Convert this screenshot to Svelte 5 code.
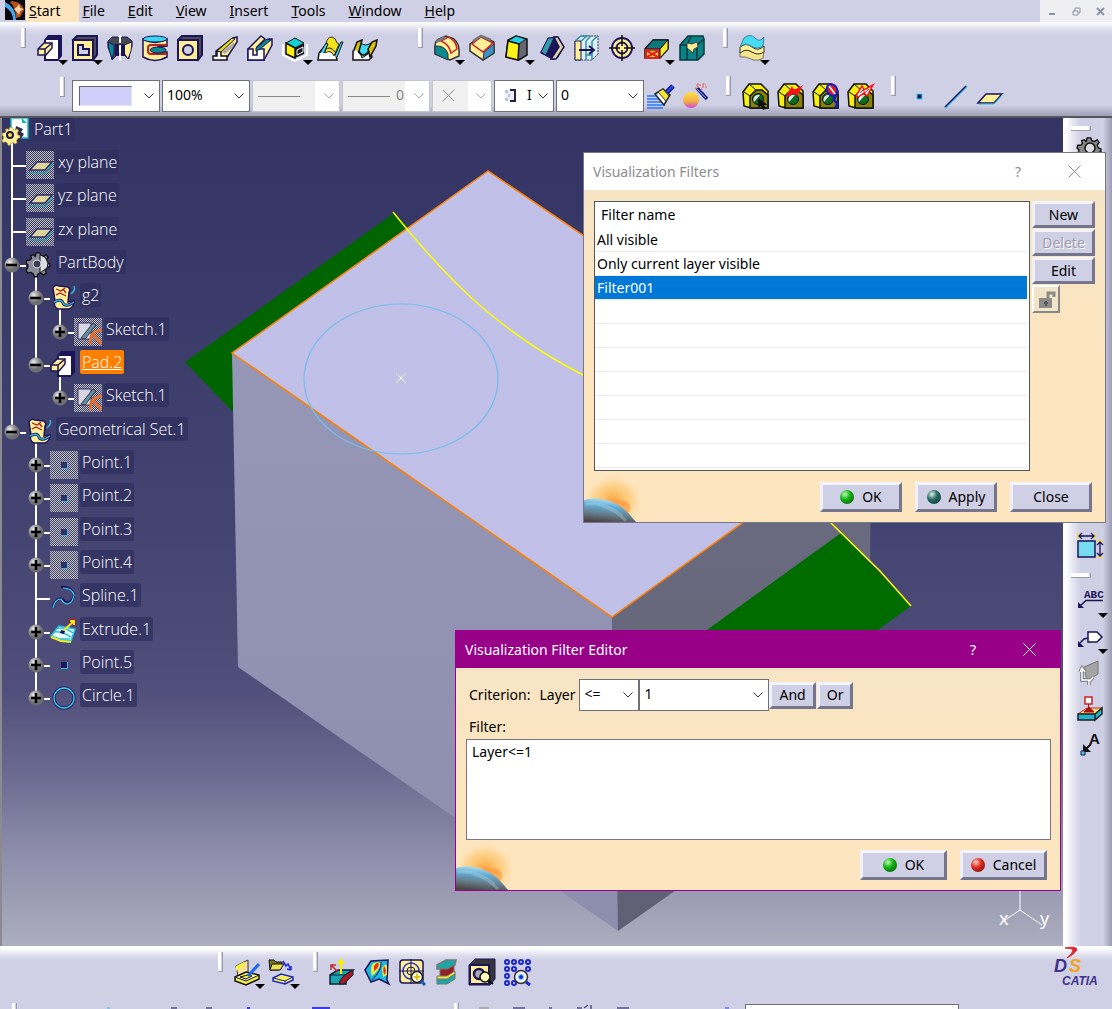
<script lang="ts">
	type TreeRow = {
		label: string;
		level: number;
		icon: string;
		node?: 'plus' | 'minus';
		hidden?: boolean;
		selected?: boolean;
	};
	type Tool = { icon: string; label: string; more?: boolean };

	const N = '#1c1458';
	const Y = '#ffef96';
	const T = '#0a8a90';

	const gear = `<path d="M11 2h4l1 3 3 1 3-2 2 3-2 3 1 3 3 1v3l-3 1-2 3 1 3-3 2-3-2-3 1-1 3H9l-1-3-3-2-3 1-2-3 2-3 0-3-2-2 1-3 3 0 2-2-1-3 3-1 2 2z" transform="scale(.92)"`;
	const nut = `<path d="M1 9l6-8h12l7 7v17H9l-7-2z" fill="#f7ee12" stroke="#111" stroke-width="1.5"/><path d="M8 25V13l6-6h6l6 5v13z" fill="#87800a" stroke="#111" stroke-width="1.5"/><path d="M2 9l6 4M7 1l7 6" stroke="#111"/><circle cx="16" cy="16" r="5.5" fill="#0b6b1e" stroke="#111"/><path d="M12 19a5 5 0 0 1 6-7z" fill="#e4e4f4"/>`;

	const icons: Record<string, string> = {
		pad: `<path d="M7 5l4-5h14v21l-4 5H7z" fill="${N}"/><path d="M9 5h12v19H9z" fill="#fff"/><path d="M1 14l6-6h8v5l-6 7H1z" fill="${Y}" stroke="${N}" stroke-width="1.5"/><path d="M1 14h7v6M8 14l7-6" fill="none" stroke="${N}" stroke-width="1.5"/>`,
		pocket: `<path d="M1 5l4-4h20v19l-4 5z" fill="#4b4b58" stroke="${N}" stroke-width="2"/><path d="M1 5h20v20H1z" fill="${Y}" stroke="${N}" stroke-width="2"/><path d="M6 10h5v4h6v6H6z" fill="#cfcfe5" stroke="${N}" stroke-width="2"/>`,
		shaft: `<path d="M1 6l4-4h6l2 3 2-3h5l5 4v6l-3 4v8l-5-4V10H9v11l-4 4-1-8-3-4z" fill="#474752" stroke="${N}"/><path d="M1 7l6 3v8l-2 6-3-9z" fill="${T}" stroke="${N}"/><path d="M17 10l8-3-1 9-3 8-4-6z" fill="${Y}" stroke="${N}"/><path d="M8 9h4v12H8zM14 9h4v12h-4z" fill="${N}"/><path d="M13 0v26" stroke="#fff" stroke-width="2" stroke-dasharray="8 2"/>`,
		groove: `<path d="M1 4q12 7 24 0v7l-9 1v5h9v5q-12 7-24 0z" fill="${Y}" stroke="${N}" stroke-width="1.5"/><ellipse cx="13" cy="4" rx="12" ry="3" fill="#36d5f5" stroke="${N}"/><path d="M25 10H9q-3 0-3 3v3q0 3 3 3h16" fill="none" stroke="#bb2222" stroke-width="2"/><ellipse cx="16" cy="15" rx="8" ry="3" fill="${T}" stroke="${N}"/>`,
		hole: `<path d="M1 5l4-4h20v19l-4 5z" fill="#4b4b58" stroke="${N}" stroke-width="2"/><path d="M1 5h20v20H1z" fill="${Y}" stroke="${N}" stroke-width="2"/><circle cx="11" cy="15" r="5" fill="#cfcfe5" stroke="${N}" stroke-width="2"/>`,
		rib: `<path d="M14 24L25 7V2l-4 1L4 16v5z" fill="${Y}" stroke="${N}" stroke-width="1.5"/><path d="M1 25v-4h4v-5h4v5h6v4z" fill="#fff" stroke="#111" stroke-width="1.5"/><path d="M5 16L20 3l3 1L9 17z" fill="#e8dc22" stroke="#111"/><path d="M10 17L22 7v4l-9 8z" fill="#aaa"/>`,
		slot: `<path d="M1 14L14 1l4 3-8 8v3L22 4h3v6L17 25H1z" fill="${Y}" stroke="${N}" stroke-width="1.5"/><path d="M1 14h5v6h4v-6h7v11H1z" fill="#fff" stroke="${N}" stroke-width="1.5"/><path d="M9 16v-3L20 4l4 1-11 9z" fill="${T}" stroke="${N}"/>`,
		solidCombine: `<path d="M1 9v11l12 6 12-6V9" fill="none" stroke="#fff" stroke-width="2"/><path d="M4 8l9-5 9 5-9 5z" fill="#12cfd5" stroke="#111"/><path d="M4 8l9 5v10l-9-4z" fill="#ffef12" stroke="#111" stroke-width="1.5"/><path d="M22 8l-9 5v10l9-4z" fill="#16161c"/><path d="M15 15l6-3v5l-6 3z" fill="none" stroke="#fff"/>`,
		multiSection: `<path d="M1 25l1-7 5-6 4 3 8 5 1 5z" fill="#fff" stroke="#111" stroke-width="1.5"/><path d="M9 9q1-7 6-7 4 1 5 6l2 1-5 12q-3-7-9-3z" fill="#f5e21b" stroke="#333"/><path d="M3 18l6-10 2 1-4 9M18 20l6-13h2l-6 15" fill="#3fdaf3" stroke="#111"/><path d="M8 15q5-5 10 2" fill="none" stroke="#111"/>`,
		removedMulti: `<path d="M1 25v-9l5-4 12 4 2 6-3 3z" fill="#fff" stroke="#111" stroke-width="1.5"/><path d="M6 12l3-4q4 4 10 0l-3 11-6 4z" fill="#3fdaf3" stroke="#111"/><path d="M2 15L5 7l5-2-3 11M16 14l4-7 5-2-1 6-6 11z" fill="#d3bd16" stroke="#111" stroke-width="1.5"/><path d="M6 16q5 8 11 0" fill="none" stroke="#111" stroke-width="1.5"/>`,
		fillet: `<path d="M1 11q0-5 4-7l7-3 8 3q5 5 5 11v6l-9 4-15-6z" fill="${Y}" stroke="#333" stroke-width="1.5"/><path d="M1 11q10-1 13 8v6L1 19z" fill="${T}" stroke="#333"/><path d="M7 6l7-4q8 3 9 12l-6 4Q15 9 7 6z" fill="${Y}" stroke="#c9222c" stroke-width="1.5"/><path d="M2 7l9-5" stroke="#777" stroke-width="3"/>`,
		chamfer: `<path d="M1 9L12 1l13 6v11l-11 7L1 16z" fill="${Y}" stroke="#333" stroke-width="1.5"/><path d="M15 17l10-8v9l-11 7z" fill="#3c93c8" stroke="#333"/><path d="M3 9l9-7 12 6-10 9z" fill="${Y}" stroke="#c9222c" stroke-width="1.5"/><path d="M4 6l8-5 10 4" fill="none" stroke="#777" stroke-width="2.5"/>`,
		draft: `<path d="M4 5l8-4 11 3v16l-8 5-13-3z" fill="#666672" stroke="#111" stroke-width="1.5"/><path d="M4 6l8-5 10 3-7 5z" fill="#26cbe0" stroke="#111"/><path d="M4 6l11 3-1 16-12-3z" fill="#fcf31b" stroke="#111" stroke-width="1.5"/>`,
		shell: `<path d="M1 18L9 3l9-2 7 11-6 11-5 2z" fill="${N}"/><path d="M2 17L9 3h6L7 20z" fill="#3199a7" stroke="${N}"/><path d="M15 2h4l6 10-8 12h-5l8-12z" fill="#dcd7a5" stroke="${N}" stroke-width="1.5"/>`,
		thickness: `<path d="M1 6l6-5h17v18l-6 6H1z" fill="#d9f0f7" stroke="#334" stroke-dasharray="2 1"/><path d="M1 6h6v19H1z" fill="${Y}" stroke="${N}"/><path d="M1 6l6-5h6L7 6M12 6v19M18 6v19M12 6l5-5M18 6l6-5M12 20h6" fill="none" stroke="#398da9" stroke-width="1.5"/><path d="M5 15h14m-4-4l5 4-5 4" fill="none" stroke="${N}" stroke-width="2"/>`,
		thread: `<circle cx="13" cy="13" r="10" fill="${Y}" stroke="${N}" stroke-width="1.8"/><circle cx="13" cy="13" r="5.5" fill="none" stroke="${N}" stroke-width="1.8"/><path d="M13 0v11M13 15v11M0 13h11M15 13h11" stroke="#111" stroke-width="1.5"/>`,
		removeFace: `<path d="M1 14L9 5h15v9l-8 9H1z" fill="#e2de25" stroke="#111" stroke-width="1.5"/><path d="M1 14L9 5h15l-8 9z" fill="#0a777a" stroke="#111"/><path d="M2 15h13v8H2z" fill="#ffe62b" stroke="#d22" stroke-width="2"/><path d="M3 16l11 6M14 16L3 22" stroke="#d22" stroke-width="2"/><path d="M16 14l8-9v9l-8 9z" fill="#fae92e" stroke="#111"/>`,
		replaceFace: `<path d="M1 10l8-9h15l1 3v15l-6 6H1z" fill="#0a8286" stroke="#063940" stroke-width="1.5"/><path d="M1 10h7v15M18 10v15M8 10l4-9M18 10l7-6" fill="none" stroke="#063940" stroke-width="1.5"/><path d="M8 8l5 1 5-2 1 5-4 2-1 4-6-5z" fill="${Y}" stroke="#444"/>`,
		layers: `<path d="M1 17q6-4 12 0t12-1l-1 7q-6 4-12 1T1 22z" fill="#f2e58b" stroke="#776"/><path d="M1 12q6-5 12 0t12-1v6q-6 4-12 0T1 18z" fill="${Y}" stroke="#333"/><path d="M5 3q6-5 11 0t9-1l-1 9q-6 4-12 0T1 12z" fill="#47dcf6" stroke="#389"/>`,
		point: `<path d="M10 11h5v5h-5z" fill="${N}" stroke="#33cfee"/>`,
		line: `<path d="M3 25L25 3" stroke="#2bc6ee" stroke-width="2"/><path d="M3 24L24 3" stroke="${N}" stroke-width="1.5"/>`,
		plane: `<path d="M1 20l8-9h16l-8 9z" fill="${Y}" stroke="${N}" stroke-width="1.5"/><path d="M2 21h15l9-10" fill="none" stroke="#28c4e2"/>`,
		nutSelect: nut + `<path d="M16 15v10l3-2 2 4 3-1-2-4h4z" fill="#111"/>`,
		nutRed: nut + `<path d="M9 13l6-10 2 4 9-5-6 11-3-3-6 4z" fill="#f11"/>`,
		nutFind: nut + `<ellipse cx="20" cy="7" rx="5" ry="6" fill="#d52222" stroke="#1a1ac0" stroke-width="2" transform="rotate(-35 20 7)"/><path d="M17 3l6 8" stroke="#fff" stroke-width="1.5"/><path d="M24 12l-2 5 3 3-1 5" fill="none" stroke="#1a1ac0" stroke-width="2.5"/>`,
		nutSplit: nut + `<path d="M9 13l6-10 2 4 9-5-6 11-3-3-6 4z" fill="#fff" stroke="#f11" stroke-width="1.5"/><path d="M13 10l3-3 2 3 4-4" fill="none" stroke="#f11"/>`,
		brush: `<path d="M0 13h10M0 16h14M0 19h16M0 22h18M0 25h16" stroke="#2678ff" stroke-width="1.5"/><path d="M8 11l8-5 7 6-6 10z" fill="#fff" stroke="#222" stroke-width="1.5"/><path d="M11 9l8 9 3-5-6-7z" fill="#f4e637" stroke="#333"/><path d="M20 9l6-6" stroke="#111a88" stroke-width="5"/><path d="M20 9l6-6" stroke="#2446ff" stroke-width="2"/>`,
		wand: `<defs><linearGradient id="ball" x2="0" y2="1"><stop offset="0" stop-color="#ffe14c"/><stop offset=".6" stop-color="#f2ad44"/><stop offset="1" stop-color="#ce43e4"/></linearGradient></defs><circle cx="9" cy="17" r="8" fill="url(#ball)"/><path d="M15 5l10 11" stroke="#20207a" stroke-width="3.5"/><path d="M15 6l9 9" stroke="#6fb6ff"/><path d="M14 2h10M13 6l4-5M22 0l-3 8M25 4h-5M16 0v5" stroke="#e0898f" stroke-width="1.5" stroke-dasharray="2 1"/>`,
		sketchPen: `<path d="M2 7l12-6v14L4 17z" fill="#ffdf9c" stroke="#333"/><path d="M2 7l8-4v4l-8 5z" fill="#f8f43c"/><path d="M1 18l11-5 13 3v4l-13 6-11-4z" fill="#f5ef43" stroke="#111" stroke-width="1.5"/><path d="M1 18l11 4 13-6M6 18l8-2 4 1-6 3z" fill="#fff" stroke="#111"/><path d="M14 17L25 5" stroke="#1c68f0" stroke-width="3"/>`,
		transfer: `<path d="M0 1h5l2 2h6v3l-3 5H1z" fill="#777422" stroke="#111"/><path d="M3 5h12l-4 6H1z" fill="#e8e052" stroke="#111"/><path d="M14 2l3 5 2-2 3 6m0 0v-4m0 4l-4-1" fill="none" stroke="#1726ea" stroke-width="1.5"/><path d="M4 19l8-4 12 3v3l-8 4-12-3z" fill="#f6f150" stroke="#1c25c4" stroke-width="1.5"/><path d="M4 19l12 3 8-4M16 22v3" fill="none" stroke="#1c25c4"/>`,
		draftAnalysis: `<path d="M1 16l8-5h15l-7 5v9H1z" fill="#16a5ae" stroke="#123" stroke-width="1.5"/><path d="M1 16h15l8-5" fill="none" stroke="#123"/><path d="M24 11v5l-9 9h-5q1-6 6-9z" fill="#a01c28" stroke="#123"/><path d="M9 13L2 6m0 5V6h5" fill="none" stroke="#c42a2a" stroke-width="1.5"/><path d="M12 15V2M9 5l3-4 3 4" fill="none" stroke="#f8f000" stroke-width="2"/>`,
		curvature: `<path d="M1 11L7 2l17-1-1 20 2 4-10-5-8 3z" fill="#19b6df" stroke="${N}" stroke-width="1.5"/><path d="M8 5q5-3 9-1-2 8-9 13-2-6 0-12zM18 9q4-6 5-2v9l-4 2z" fill="#e6eb43"/><path d="M10 7q3-5 5-2-1 5-5 7zM20 7q3 3 1 9-3-3-1-9z" fill="#ea3020"/><path d="M17 3q1 8-9 18" fill="none" stroke="${N}"/>`,
		tap: `<rect x="1" y="1" width="23" height="23" rx="3" fill="${Y}" stroke="${N}" stroke-width="1.5"/><circle cx="12" cy="12" r="8" fill="none" stroke="#2636c8" stroke-width="1.5"/><circle cx="12" cy="12" r="4" fill="none" stroke="${N}"/><path d="M12 0v25M0 12h25" stroke="${N}"/><circle cx="18" cy="18" r="5.5" fill="#fffde0" stroke="#222" stroke-width="1.5"/><path d="M15 18h6M18 15v6" stroke="#d8c021" stroke-width="2"/><path d="M22 22l4 4" stroke="#1c5cc0" stroke-width="3"/>`,
		wall: `<path d="M3 6l9-5h10l-1 5-7 4H3z" fill="#1ba7a5" stroke="#777" stroke-width="1.5"/><path d="M6 10h8l6-4v8l-6 4H6z" fill="#941f26" stroke="#777"/><path d="M3 17h10l8-5v4l-8 5H3z" fill="#f1e53d" stroke="#777"/><path d="M3 20h10l8-5v5l-8 5H3z" fill="#1ba7a5" stroke="#777"/>`,
		holeFind: `<path d="M0 6l6-6h20v20l-5 6H0z" fill="#35353d" stroke="${N}"/><path d="M1 6h19v19H1z" fill="${Y}" stroke="${N}" stroke-width="2"/><circle cx="10" cy="15" r="5" fill="#aab" stroke="${N}" stroke-width="2.5"/><circle cx="16" cy="18" r="5" fill="#fffbb5" stroke="#111" stroke-width="1.5"/><path d="M19 21l5 4" stroke="#111" stroke-width="2"/>`,
		patternFind: `<g fill="none" stroke="#1a26d0" stroke-width="2"><circle cx="3" cy="3" r="2"/><circle cx="10" cy="3" r="2"/><circle cx="17" cy="3" r="2"/><circle cx="24" cy="3" r="2"/><circle cx="3" cy="10" r="2"/><circle cx="3" cy="17" r="2"/><circle cx="3" cy="24" r="2"/><circle cx="10" cy="10" r="2"/><circle cx="10" cy="24" r="2"/><circle cx="24" cy="10" r="2"/></g><circle cx="17" cy="18" r="6.5" fill="#f2f2fa" stroke="#333" stroke-width="1.5"/><circle cx="17" cy="18" r="2.5" fill="#1a26d0" stroke="#7cf" /><path d="M22 23l4 3" stroke="#1a26d0" stroke-width="3"/>`,
		part: `<path d="M9 0h17v20H9z" fill="#fff" stroke="#12b9c4" stroke-width="1.5"/><path d="M20 0v5h5z" fill="#12b9c4"/><path d="M14 8l7 3-2 3 3 2-5 8-6 2z" fill="#2c2c50"/><g transform="translate(0 8) scale(.75)">${gear} fill="${Y}" stroke="#b49a30"/></g><circle cx="8" cy="17" r="3" fill="#f6e81c" stroke="${N}" stroke-width="2"/>`,
		treePlane: `<path d="M4 19l7-8h15l-7 8z" fill="#fff2a0" stroke="${N}" stroke-width="1.5"/><path d="M3 22h17l6-9" fill="none" stroke="#15a2b0" stroke-width="1.5"/>`,
		body: `${gear} fill="#8c8c9c" stroke="#111" stroke-width="1.5"/><path d="M14 4l5 2 3 6-1 5-7 5z" fill="#dcdce4" stroke="#111"/><circle cx="11" cy="13" r="4" fill="#3c3c58" stroke="#ddd"/>`,
		geoSet: `<path d="M3 4q2-4 6-2l9 1q3 3 1 5l-1 10 6-1q0 6-5 8H8q-5-2-3-8z" fill="${Y}" stroke="${N}" stroke-width="1.5"/><path d="M6 5l5 2 4-3M6 11l4-2 6 3M13 5l3 4" fill="none" stroke="#b11b20" stroke-width="1.3"/><path d="M4 18q7-4 9 1t11-1" fill="none" stroke="${N}" stroke-width="3"/><path d="M4 18q7-4 9 1t11-1M24 2q2 4-3 8" fill="none" stroke="#30b8e2" stroke-width="1.5"/>`,
		sketch: `<path d="M4 5h13v16H4z" fill="#f4f4ff" stroke="${N}"/><path d="M7 20l12-15 3 2-11 14z" fill="#5b94ae" stroke="#222"/><path d="M17 26q-3-12 11-14M20 17l7 9" fill="none" stroke="#ff6a10" stroke-width="3"/>`,
		treePoint: `<path d="M11 11h6v6h-6z" fill="${N}"/><path d="M11 17.5h6.5V11" fill="none" stroke="#29c4ea"/>`,
		spline: `<path d="M11 3q10-1 13 7-1 10-9 8-2-4-6-3-5 2-6 9" fill="none" stroke="${N}" stroke-width="2.5"/><path d="M13 4q9 0 11 7-1 8-7 9-4-1-6-5-6 0-8 9" fill="none" stroke="#38d2f5" stroke-width="1.2"/>`,
		extrude: `<path d="M1 18l8-10 16 3-4 12-10-1z" fill="#e9fdff" stroke="#28bfdf" stroke-width="1.5"/><path d="M1 18l8 3 11 0M6 11q7-3 17 4M4 14q7-1 17 5" fill="none" stroke="#28bfdf" stroke-width="1.5"/><path d="M1 19l10 4 10 1" fill="none" stroke="#f7ec1e" stroke-width="2"/><path d="M19 1h7v6h-7z" fill="#b8131c"/><path d="M12 14L24 3M20 3h4v4" fill="none" stroke="#f7ec1e" stroke-width="2"/><path d="M11 12l4 1-1 3-4-1z" fill="${N}"/>`,
		circle: `<circle cx="14" cy="14" r="10" fill="none" stroke="${N}" stroke-width="3"/><circle cx="14" cy="14" r="10" fill="none" stroke="#38d2f5" stroke-width="1.3"/>`,
		gear: `<path d="M0 14h14v12H0z" fill="#a9dcd4"/>${gear} fill="#888" stroke="#111" stroke-width="1.5"/><circle cx="13" cy="12" r="5" fill="#ddd" stroke="#111" stroke-width="1.5"/>`,
		measure: `<path d="M1 9h17v16H1z" fill="#78dcf1" stroke="${N}" stroke-width="1.5"/><path d="M1 1v6M18 1v6M20 9h6M20 25h6" stroke="#e8da64" stroke-width="2"/><path d="M2 4h15M5 1L2 4l3 3M14 1l3 3-3 3M23 10v14M20 13l3-3 3 3M20 21l3 3 3-3" fill="none" stroke="${N}" stroke-width="1.3"/>`,
		text: `<text x="7" y="10" font-size="11" font-weight="700" font-family="Liberation Mono, monospace" fill="${N}">ABC</text><path d="M26 12.5H9L3 18" fill="none" stroke="${N}" stroke-width="1.5"/><path d="M1 14v6h6z" fill="${N}"/>`,
		flag: `<path d="M11 8h9l5 5-5 5h-9z" fill="#fff" stroke="${N}" stroke-width="1.5"/><path d="M11 14l-4 1-4 4" fill="none" stroke="${N}" stroke-width="1.5"/><path d="M1 17v6h6z" fill="${N}"/>`,
		view: `<path d="M7 7l14-6v13L10 21z" fill="#a5a5a5" stroke="#777"/><path d="M5 9v11h7v5m-9-13l2-4 3 4M12 22l4-5" fill="none" stroke="#777" stroke-width="3.5"/><path d="M5 9v11h7v5m-9-13l2-4 3 4M12 22l4-5" fill="none" stroke="#fff" stroke-width="1.5"/>`,
		stamp: `<path d="M1 18l9-6h15l-7 6z" fill="#ffdf76" stroke="#c22"/><path d="M1 18h17v6H1zM18 18l7-6v6l-7 6z" fill="#23b3cd" stroke="#222" stroke-width="1.5"/><path d="M8 1h7v7H8z" fill="#fff" stroke="#c22" stroke-width="1.5"/><path d="M11.5 8v5M7 16l5-5 5 5z" fill="#a11" stroke="#a11"/>`,
		note: `<text x="12" y="12" font-size="15" font-weight="700" font-family="Liberation Sans, sans-serif" fill="#111">A</text><path d="M14 12l-5 5" stroke="#111" stroke-width="2"/><path d="M6 12v8h8z" fill="#111"/><path d="M4 19h4v4H4z" fill="#48c7df" stroke="${N}"/>`
	};

	// checkerboard behind the icons of hidden elements, one dashed line per pixel row
	const dither = Array.from({ length: 28 }, (_, y) => `M${y % 2} ${y + 0.5}H28`).join('');

	const menus = ['File', 'Edit', 'View', 'Insert', 'Tools', 'Window', 'Help'];

	const sketchTools: Tool[] = [
		{ icon: 'pad', label: 'Pad', more: true },
		{ icon: 'pocket', label: 'Pocket', more: true },
		{ icon: 'shaft', label: 'Shaft' },
		{ icon: 'groove', label: 'Groove' },
		{ icon: 'hole', label: 'Hole' },
		{ icon: 'rib', label: 'Rib' },
		{ icon: 'slot', label: 'Slot' },
		{ icon: 'solidCombine', label: 'Solid Combine', more: true },
		{ icon: 'multiSection', label: 'Multi-sections Solid' },
		{ icon: 'removedMulti', label: 'Removed Multi-sections Solid' }
	];
	const dressUpTools: Tool[] = [
		{ icon: 'fillet', label: 'Edge Fillet', more: true },
		{ icon: 'chamfer', label: 'Chamfer' },
		{ icon: 'draft', label: 'Draft Angle', more: true },
		{ icon: 'shell', label: 'Shell' },
		{ icon: 'thickness', label: 'Thickness' },
		{ icon: 'thread', label: 'Thread' },
		{ icon: 'removeFace', label: 'Remove Face', more: true },
		{ icon: 'replaceFace', label: 'Replace Face' }
	];
	const surfaceTools: Tool[] = [{ icon: 'layers', label: 'Thick Surface', more: true }];
	const painterTools: Tool[] = [
		{ icon: 'brush', label: 'Painter' },
		{ icon: 'wand', label: 'Wizard' }
	];
	const selectTools: Tool[] = [
		{ icon: 'nutSelect', label: 'Select' },
		{ icon: 'nutRed', label: 'Update' },
		{ icon: 'nutFind', label: 'Search' },
		{ icon: 'nutSplit', label: 'Manual Update' }
	];
	const referenceTools: Tool[] = [
		{ icon: 'point', label: 'Point' },
		{ icon: 'line', label: 'Line' },
		{ icon: 'plane', label: 'Plane' }
	];
	const dockTop: Tool[] = [
		{ icon: 'gear', label: 'Workbench' },
		...['pad', 'hole', 'rib', 'draft', 'shell', 'thread', 'plane', 'line', 'point', 'stamp'].map(
			(icon) => ({ icon, label: icon })
		),
		{ icon: 'measure', label: 'Measure' }
	];
	const dockNotes: Tool[] = [
		{ icon: 'text', label: 'Text with Leader', more: true },
		{ icon: 'flag', label: 'Flag Note', more: true },
		{ icon: 'view', label: 'View' },
		{ icon: 'stamp', label: 'Annotation' },
		{ icon: 'note', label: 'Note' }
	];
	const sketcherTools: Tool[] = [
		{ icon: 'sketchPen', label: 'Sketch', more: true },
		{ icon: 'transfer', label: 'Insert Body', more: true }
	];
	const analysisTools: Tool[] = [
		{ icon: 'draftAnalysis', label: 'Draft Analysis' },
		{ icon: 'curvature', label: 'Curvature Analysis' },
		{ icon: 'tap', label: 'Tap Analysis' },
		{ icon: 'wall', label: 'Wall Thickness' },
		{ icon: 'holeFind', label: 'Hole Analysis' },
		{ icon: 'patternFind', label: 'Pattern Analysis' }
	];

	const tree: TreeRow[] = [
		{ label: 'Part1', level: 0, icon: 'part' },
		{ label: 'xy plane', level: 1, icon: 'treePlane', hidden: true },
		{ label: 'yz plane', level: 1, icon: 'treePlane', hidden: true },
		{ label: 'zx plane', level: 1, icon: 'treePlane', hidden: true },
		{ label: 'PartBody', level: 1, icon: 'body', node: 'minus' },
		{ label: 'g2', level: 2, icon: 'geoSet', node: 'minus' },
		{ label: 'Sketch.1', level: 3, icon: 'sketch', node: 'plus', hidden: true },
		{ label: 'Pad.2', level: 2, icon: 'pad', node: 'minus', selected: true },
		{ label: 'Sketch.1', level: 3, icon: 'sketch', node: 'plus', hidden: true },
		{ label: 'Geometrical Set.1', level: 1, icon: 'geoSet', node: 'minus' },
		{ label: 'Point.1', level: 2, icon: 'treePoint', node: 'plus', hidden: true },
		{ label: 'Point.2', level: 2, icon: 'treePoint', node: 'plus', hidden: true },
		{ label: 'Point.3', level: 2, icon: 'treePoint', node: 'plus', hidden: true },
		{ label: 'Point.4', level: 2, icon: 'treePoint', node: 'plus', hidden: true },
		{ label: 'Spline.1', level: 2, icon: 'spline' },
		{ label: 'Extrude.1', level: 2, icon: 'extrude', node: 'plus' },
		{ label: 'Point.5', level: 2, icon: 'treePoint', node: 'plus' },
		{ label: 'Circle.1', level: 2, icon: 'circle', node: 'plus' }
	];

	const filters = ['All visible', 'Only current layer visible', 'Filter001'];
	const emptyRows = Array(7).fill('');

	let selectedFilter = $state('Filter001');
	let filterText = $state('Layer<=1');
</script>

{#snippet icon(name: string)}
	<svg class="icon" viewBox="0 0 26 26" fill="none" aria-hidden="true">{@html icons[name]}</svg>
{/snippet}

{#snippet tools(items: Tool[])}
	{#each items as tool}
		<button class="tool" aria-label={tool.label}>
			{@render icon(tool.icon)}
			{#if tool.more}<span class="more"></span>{/if}
		</button>
	{/each}
{/snippet}

{#snippet chevron()}
	<svg class="chevron" viewBox="0 0 10 6" aria-hidden="true">
		<path d="M.5 .5L5 5l4.5-4.5" fill="none" stroke="currentColor" />
	</svg>
{/snippet}

{#snippet planet()}
	<svg class="planet" viewBox="0 0 60 48" aria-hidden="true">
		<defs>
			<radialGradient id="glow"><stop offset="0" stop-color="#ff9a3c" /><stop offset=".25" stop-color="#fdb95c" /><stop offset=".65" stop-color="#fcd080" stop-opacity=".7" /><stop offset="1" stop-color="#fde5bf" stop-opacity="0" /></radialGradient>
			<linearGradient id="globe" x1=".55" y1="0" x2=".3" y2="1"><stop offset="0" stop-color="#c4e6f2" /><stop offset=".35" stop-color="#62acd4" /><stop offset=".65" stop-color="#66808f" /><stop offset="1" stop-color="#4c4444" /></linearGradient>
		</defs>
		<ellipse cx="29" cy="28" rx="31" ry="28" fill="url(#glow)" />
		<circle cx="38" cy="34" r="8" fill="#ff9440" fill-opacity=".6" />
		<path d="M0 26Q12 22 26 27T52 48H0z" fill="url(#globe)" />
		<path d="M2 30q20-2 36 12M18 32q14 4 24 15" fill="none" stroke="#bfe2f2" stroke-opacity=".3" stroke-width="3" />
	</svg>
{/snippet}

<div class="app">
	<nav class="menubar">
		<span class="app-icon">
			<svg viewBox="0 0 20 20" aria-hidden="true">
				<path d="M0 0h20v20H0z" fill="#08080c" />
				<path d="M7 1q10 1 12 9l-4 7-4 1Q11 8 5 2z" fill="#b4501e" />
				<path d="M14 4l1 4 4 1-4 2-1 4-2-3-3-3 3-2z" fill="#ffd49a" />
				<path d="M0 2q11 5 11 18H8Q8 11 0 7z" fill="#4aa5ea" />
			</svg>
		</span>
		<button class="menu start"><u>S</u>tart</button>
		{#each menus as menu}
			<button class="menu"><u>{menu[0]}</u>{menu.slice(1)}</button>
		{/each}
		<div class="window-buttons">
			<button aria-label="Minimize"><svg viewBox="0 0 9 9"><path d="M1 7h6" stroke-width="2" /></svg></button>
			<button aria-label="Restore"><svg viewBox="0 0 9 9"><path d="M1 4h5v4H1zM3 4V1h5v5H6" /></svg></button>
			<button aria-label="Close"><svg viewBox="0 0 9 9"><path d="M1 1l7 7M8 1L1 8" stroke-width="2" /></svg></button>
		</div>
	</nav>

	<header class="bars">
		<div class="bar">
			<div class="group solids"><span class="grip"></span>{@render tools(sketchTools)}</div>
			<div class="group dress"><span class="grip"></span>{@render tools(dressUpTools)}</div>
			<div class="group"><span class="grip"></span>{@render tools(surfaceTools)}</div>
		</div>
		<div class="bar props">
			<span class="grip"></span>
			<div class="combos">
				<div class="combo">
					<select aria-label="Fill color"><option></option></select>
					<span class="swatch"></span>
					{@render chevron()}
				</div>
				<div class="combo">
					<select aria-label="Transparency"><option>100%</option></select>
					{@render chevron()}
				</div>
				<div class="combo off">
					<select aria-label="Line weight" disabled><option></option></select>
					<span class="rule"></span>
					{@render chevron()}
				</div>
				<div class="combo off line-type">
					<select aria-label="Line type" disabled><option>0</option></select>
					<span class="rule"></span>
					{@render chevron()}
				</div>
				<div class="combo narrow off">
					<select aria-label="Point symbol" disabled><option></option></select>
					<svg class="mark" viewBox="0 0 13 13"><path d="M1 1l11 11M12 1L1 12" stroke="#888" /></svg>
					{@render chevron()}
				</div>
				<div class="combo narrow">
					<select aria-label="Rendering style"><option>I</option></select>
					<svg class="mark" viewBox="0 0 13 13"><path d="M1 1h10v11H1z" fill="#ececfa" /><path d="M1 1h3v3H1zM1 9h3v3H1zM4 5h2v3H4z" fill="#b8c4ea" /><path d="M6 1h5v11H6" fill="none" stroke="#222244" stroke-width="2" /></svg>
					{@render chevron()}
				</div>
				<div class="combo">
					<select aria-label="Layer number"><option>0</option></select>
					{@render chevron()}
				</div>
			</div>
			<div class="group painter">{@render tools(painterTools)}</div>
			<div class="group"><span class="grip"></span>{@render tools(selectTools)}</div>
			<div class="group"><span class="grip"></span>{@render tools(referenceTools)}</div>
		</div>
	</header>

	<div class="workspace">
		<main class="viewport">
			<svg class="scene" viewBox="0 118 1063 828" preserveAspectRatio="xMinYMin slice" role="img" aria-label="3D part">
				<defs>
					<linearGradient id="leftFace" x2="0" y2="1"><stop offset="0" stop-color="#9696b6" /><stop offset="1" stop-color="#8d8dae" /></linearGradient>
					<linearGradient id="rightFace" x2="0" y2="1"><stop offset="0" stop-color="#6c6c82" /><stop offset="1" stop-color="#606074" /></linearGradient>
				</defs>
				<path d="M394 213L185 362l47 49 40-30 150-140z" fill="#006500" />
				<path d="M232 353l380 264 6 314-380-264z" fill="url(#leftFace)" />
				<path d="M612 617l259-187-2 324-251 177z" fill="url(#rightFace)" />
				<path d="M488 171L232 353l380 264 259-187z" fill="#c0c0e8" stroke="#ff8000" stroke-width="1.5" />
				<path d="M841 533l70 73-65 47H675z" fill="#006c00" />
				<path d="M393 212C450 283 500 332 583 375S800 480 831 523L880 571 911 606" fill="none" stroke="#ffff00" stroke-width="1.5" />
				<ellipse cx="401" cy="379" rx="97" ry="75" fill="none" stroke="#76bdec" stroke-width="1.2" />
				<path d="M396 373l10 10M406 373l-10 10" stroke="#fff" />
				<path d="M1020 880v30l-15 10M1020 910l22 15" fill="none" stroke="#fff" />
				<text x="999" y="925">x</text>
				<text x="1040" y="925">y</text>
			</svg>

			<div class="tree">
				<svg class="tree-lines" viewBox="0 0 80 600" aria-hidden="true">
					<path d="M12 20v298M36 155v97M60 186v32M60 252v34M36 320v265M12 51h14M12 84h14M12 117h14M36 484h14" fill="none" stroke="#fff" stroke-width="2" />
				</svg>
				<ul>
					{#each tree as row}
						<li class="level-{row.level}">
							{#if row.node}
								<button class="node" aria-label="Toggle {row.label}">
									<svg viewBox="0 0 16 16">
										<defs><radialGradient id="ball-grey" cx=".35" cy=".3"><stop offset="0" stop-color="#eee" /><stop offset=".5" stop-color="#a5a5a5" /><stop offset="1" stop-color="#6e6e72" /></radialGradient></defs>
										<circle cx="8" cy="8" r="7.5" fill="url(#ball-grey)" />
										<path d={row.node === 'plus' ? 'M3 8h10M8 3v10' : 'M2 8h11'} stroke="#000" stroke-width="2.5" />
									</svg>
								</button>
								<span class="tick"></span>
							{/if}
							<svg class="tree-icon" viewBox="0 0 28 28" aria-hidden="true">
								{#if row.hidden}<path d={dither} stroke="#c0c0bc" stroke-dasharray="1 1" />{/if}
								<g opacity={row.hidden ? 0.75 : 1}>{@html icons[row.icon]}</g>
							</svg>
							<span class="label" class:selected={row.selected}>{row.label}</span>
						</li>
					{/each}
				</ul>
			</div>
		</main>

		<aside class="dock">
			<span class="grip"></span>
			{@render tools(dockTop)}
			<span class="grip"></span>
			{@render tools(dockNotes)}
		</aside>
	</div>

	<footer class="bottom">
		<div class="bar sketcher">
			<div class="group"><span class="grip"></span>{@render tools(sketcherTools)}</div>
			<div class="group"><span class="grip"></span>{@render tools(analysisTools)}</div>
		</div>
		<div class="clipped">
			<span class="grip"></span>
			<svg viewBox="0 0 437 6" aria-hidden="true">
				<path d="M90 5h3" stroke="#2ac0e8" />
				<path d="M154 5h6M189 5h6" stroke="#1c1458" />
				<path d="M230 5h3M295 5h18" stroke="#3a3af0" stroke-width="2" />
			</svg>
			<span class="grip"></span>
			<svg class="second" viewBox="0 0 286 6" aria-hidden="true">
				<path d="M20 5h10" stroke="#888" />
				<path d="M54 5h12M90 5h3M118 5h5M125 5l4-3M132 2v4M158 5h12" stroke="#1c1458" />
				<path d="M266 5h4" stroke="#2a4cf0" />
			</svg>
			<input aria-label="Power input" />
		</div>
		<svg class="logo" viewBox="0 0 52 42" role="img" aria-label="CATIA">
			<path d="M12 2q10-2 12 1-1 4-10 9 6-5 6-8-1-2-8-2z" fill="#e0262c" stroke="#e0262c" />
			<text x="1" y="26" font-size="18" fill="#40318c">D<tspan dx="2" fill="#f5a31c">S</tspan></text>
			<text x="9" y="39" font-size="12" fill="#40318c">CATIA</text>
		</svg>
	</footer>

	<section class="dialog filters" aria-label="Visualization Filters">
		<div class="titlebar">
			<h2>Visualization Filters</h2>
			<button aria-label="Help">?</button>
			<button aria-label="Close"><svg viewBox="0 0 13 13"><path d="M.5 .5l12 12M12.5 .5l-12 12" /></svg></button>
		</div>
		<div class="body">
			<div class="filter-area">
				<div class="list">
					<table>
						<thead><tr><th>Filter name</th></tr></thead>
						<tbody>
							{#each filters as filter}
								<tr class:current={filter === selectedFilter} onclick={() => (selectedFilter = filter)}>
									<td>{filter}</td>
								</tr>
							{/each}
							{#each emptyRows as _}
								<tr><td></td></tr>
							{/each}
						</tbody>
					</table>
				</div>
				<div class="side">
					<button class="btn">New</button>
					<button class="btn" disabled>Delete</button>
					<button class="btn">Edit</button>
					<button class="lock" aria-label="Lock">
						<svg viewBox="0 0 20 20"><path d="M3 9h13v10H3z" fill="#8c8c86" /><path d="M12 9V4h6v4" fill="none" stroke="#8c8c86" stroke-width="3" /><path d="M10 12v5M8 14h4" stroke="#55555a" stroke-width="2" /></svg>
					</button>
				</div>
			</div>
			<div class="actions">
				<button class="btn"><span class="led green"></span>OK</button>
				<button class="btn"><span class="led teal"></span>Apply</button>
				<button class="btn">Close</button>
			</div>
			{@render planet()}
		</div>
	</section>

	<section class="dialog editor" aria-label="Visualization Filter Editor">
		<div class="titlebar">
			<h2>Visualization Filter Editor</h2>
			<button aria-label="Help">?</button>
			<button aria-label="Close"><svg viewBox="0 0 13 13"><path d="M.5 .5l12 12M12.5 .5l-12 12" /></svg></button>
		</div>
		<div class="body">
			<div class="criterion">
				<span>Criterion:</span>
				<label for="operator">Layer</label>
				<div class="combo operator">
					<select id="operator"><option>&lt;=</option></select>
					{@render chevron()}
				</div>
				<div class="combo value">
					<select aria-label="Layer value"><option>1</option></select>
					{@render chevron()}
				</div>
				<button class="btn">And</button>
				<button class="btn">Or</button>
			</div>
			<label class="filter-label" for="filter">Filter:</label>
			<textarea id="filter" bind:value={filterText}></textarea>
			<div class="actions">
				<button class="btn"><span class="led green"></span>OK</button>
				<button class="btn"><span class="led red"></span>Cancel</button>
			</div>
			{@render planet()}
		</div>
	</section>
</div>

<style>
	:global(body) {
		margin: 0;
		background: #cfcfe5;
	}

	.app {
		position: relative;
		display: flex;
		flex-direction: column;
		height: 100vh;
		overflow: hidden;
		background: #cfcfe5;
		color: #000;
		font: 14px/20px 'Segoe UI', 'Noto Sans', sans-serif;
	}

	button,
	select,
	input,
	textarea {
		font: inherit;
		color: inherit;
		box-sizing: border-box;
	}

	button {
		border: 0;
		padding: 0;
		background: none;
	}

	svg {
		display: block;
	}

	/* menu bar */
	.menubar {
		display: flex;
		align-items: stretch;
		gap: 1px;
		height: 22px;
		padding-left: 5px;
	}

	.app-icon {
		width: 20px;
	}

	.app-icon svg {
		width: 20px;
		height: 20px;
	}

	.menu {
		padding: 0 11px;
	}

	.menu.start {
		padding: 0 19px 0 3px;
		margin-right: -9px;
		background: #fde4bd;
	}

	.window-buttons {
		display: flex;
		justify-content: space-around;
		align-items: center;
		width: 72px;
		margin-left: auto;
		background: #efeff2;
	}

	.window-buttons svg {
		width: 9px;
		height: 9px;
		fill: none;
		stroke: #8a94a4;
	}

	/* toolbars */
	.bars {
		height: 94px;
		background: linear-gradient(#ffffff, #dadaeb 8px, #cfcfe5 14px, #cfcfe5 83px, #a2a2b8 93px);
		border-bottom: 2px solid #55555c;
	}

	.bar {
		display: flex;
		align-items: flex-start;
	}

	.bars .bar {
		padding: 13px 0 0 21px;
		height: 38px;
	}

	.bars .props {
		height: 34px;
		padding: 9px 0 0 60px;
	}

	.group {
		display: flex;
		align-items: flex-start;
		gap: 9px;
		padding-right: 18px;
	}

	.solids {
		padding-right: 40px;
	}

	.grip {
		flex: none;
		box-sizing: border-box;
		width: 5px;
		height: 20px;
		background: #fff;
		border-right: 1px solid #9a9aae;
		border-bottom: 1px solid #9a9aae;
		box-shadow: inset -1px 0 #cfcfe5;
		margin-top: -7px;
		margin-right: 2px;
	}

	.tool {
		position: relative;
		flex: none;
		width: 26px;
		height: 26px;
	}

	.icon {
		width: 26px;
		height: 26px;
		overflow: visible;
	}

	.more {
		position: absolute;
		right: -5px;
		bottom: -4px;
		border: 5px solid transparent;
		border-top-color: #000;
		border-bottom: 0;
	}

	.combos {
		display: flex;
		gap: 2px;
		margin-left: 5px;
		margin-top: -2px;
	}

	.props > .grip {
		margin-top: -5px;
	}

	.props .group {
		margin-top: 1px;
	}

	.combo {
		position: relative;
		width: 88px;
		height: 32px;
		color: #000;
	}

	.combo select {
		display: block;
		width: 100%;
		height: 100%;
		padding: 0 4px 2px;
		border: 1px solid #707078;
		border-radius: 0;
		background: #fff;
		appearance: none;
		opacity: 1;
	}

	.combo .chevron {
		position: absolute;
		right: 6px;
		top: 13px;
		width: 10px;
		height: 6px;
		color: #333;
		pointer-events: none;
	}

	.combo.off select {
		border-color: #c4c4cc;
		background: linear-gradient(90deg, #f0f0f0 0 72%, #fff 72%);
	}

	.combo.off .chevron {
		color: #aaa;
	}

	.line-type select {
		padding-left: 53px;
		color: #888;
	}

	.swatch {
		position: absolute;
		left: 7px;
		top: 6px;
		width: 51px;
		height: 18px;
		background: #cfcffc;
		border: 1px solid #e4e4e4;
		border-top-color: #666;
		border-left-color: #666;
		pointer-events: none;
	}

	.rule {
		position: absolute;
		left: 6px;
		top: 16px;
		width: 42px;
		height: 1px;
		background: #888;
	}

	.combo.narrow {
		width: 60px;
	}

	.combo.narrow select {
		padding-left: 32px;
	}

	.combo.narrow.off select {
		background: linear-gradient(90deg, #f0f0f0 0 60%, #fff 60%);
	}

	.mark {
		position: absolute;
		left: 10px;
		top: 9px;
		width: 13px;
		height: 13px;
		pointer-events: none;
	}

	.painter {
		margin-left: 3px;
	}

	/* workspace */
	.workspace {
		display: flex;
		flex: 1;
		min-height: 0;
	}

	.viewport {
		position: relative;
		flex: 1;
		overflow: hidden;
		border-left: 2px solid #8a8a90;
		background: linear-gradient(#333364, #444472 50%, #504e7a 69%, #6a6a90 79%, #8e8eab 89%, #adadc0);
	}

	.scene {
		position: absolute;
		top: 0;
		left: -2px;
		width: calc(100% + 2px);
		height: 100%;
	}

	.scene text {
		fill: #fff;
		font-size: 18px;
	}

	.tree {
		position: absolute;
		top: -3px;
		left: -2px;
		color: #fff;
		font: 300 16px/24px 'Open Sans', 'Noto Sans', sans-serif;
	}

	.tree-lines {
		position: absolute;
		top: 0;
		left: 0;
		width: 80px;
		height: 600px;
	}

	.tree ul {
		position: relative;
		display: grid;
		grid-template-rows: repeat(6, 33px 33px 34px);
		margin: 0;
		padding: 0;
		list-style: none;
	}

	.tree li {
		display: flex;
		align-items: flex-start;
		padding-left: 26px;
	}

	.tree .level-0 {
		padding-left: 2px;
	}

	.tree .level-2 {
		padding-left: 50px;
	}

	.tree .level-3 {
		padding-left: 74px;
	}

	.node {
		width: 16px;
		height: 16px;
		margin: 9px 0 0 -22px;
	}

	.tick {
		width: 6px;
		height: 2px;
		margin-top: 17px;
		background: #fff;
	}

	.tree-icon {
		width: 28px;
		height: 28px;
		margin-top: 3px;
		fill: none;
	}

	.label {
		margin: 2px 0 0 2px;
		padding: 0 2px;
		background: rgba(46, 46, 94, 0.7);
		border-radius: 2px;
	}

	.label.selected {
		background: #ff8000;
		text-decoration: underline;
	}

	.dock {
		display: flex;
		flex-direction: column;
		align-items: center;
		gap: 10px;
		flex: none;
		box-sizing: border-box;
		width: 49px;
		padding: 8px 0 0 4px;
		background: linear-gradient(90deg, #fff 3px, #e6e6f2 10px, #cfcfe5 18px, #cfcfe5 40px, #9c9cb2);
		overflow: hidden;
	}

	.dock .grip {
		width: 20px;
		height: 5px;
		margin: 5px 18px 0 0;
	}

	.dock .grip:first-child {
		margin: 0 18px -5px 0;
	}

	/* bottom bars */
	.bottom {
		position: relative;
		height: 63px;
		overflow: hidden;
		background: linear-gradient(#fff 2px, #dcdcec 10px, #cfcfe5 16px);
	}

	.sketcher {
		height: 44px;
		padding: 13px 0 0 218px;
	}

	.clipped {
		display: flex;
		padding-left: 12px;
	}

	.clipped .grip {
		margin: 0;
	}

	.clipped svg {
		width: 437px;
		height: 6px;
	}

	.clipped svg.second {
		width: 286px;
	}

	.clipped input {
		width: 214px;
		height: 24px;
		margin-top: 1px;
		border: 1px solid #707078;
	}

	.logo {
		position: absolute;
		right: 7px;
		top: 0;
		width: 52px;
		height: 42px;
		font-family: 'Liberation Sans', sans-serif;
		font-weight: 700;
		font-style: italic;
	}

	/* dialogs */
	.dialog {
		position: absolute;
		display: flex;
		flex-direction: column;
		box-sizing: border-box;
		border: 1px solid #77778c;
		background: linear-gradient(#f5e4c6, #fde5bf 60%);
	}

	.titlebar {
		display: flex;
		align-items: center;
		height: 37px;
		padding: 0 24px 0 9px;
		background: #fff;
		color: #8c8c8c;
	}

	.titlebar h2 {
		flex: 1;
		margin: 0;
		font-size: 14px;
		font-weight: 400;
	}

	.titlebar button + button {
		margin-left: 47px;
	}

	.titlebar svg {
		width: 13px;
		height: 13px;
		fill: none;
		stroke: currentColor;
	}

	.body {
		position: relative;
		display: flex;
		flex-direction: column;
		flex: 1;
	}

	.filters {
		left: 583px;
		top: 152px;
		width: 523px;
		height: 371px;
	}

	.filter-area {
		display: flex;
		gap: 2px;
		padding: 11px 10px 0;
	}

	.list {
		flex: 1;
		height: 268px;
		overflow: hidden;
		background: #fff;
		border: 1px solid #55555c;
		padding-right: 2px;
	}

	table {
		width: 100%;
		border-collapse: collapse;
	}

	th,
	td {
		height: 23px;
		padding: 0 2px;
		border-bottom: 1px solid #ececec;
		font-weight: 400;
		text-align: left;
	}

	th {
		height: 26px;
		padding-left: 6px;
		border: 0;
	}

	.current td {
		background: #0078d7;
		color: #fff;
	}

	.side {
		display: flex;
		flex-direction: column;
		width: 63px;
		gap: 1px;
	}

	.btn {
		display: flex;
		align-items: center;
		justify-content: center;
		height: 27px;
		border: 3px solid;
		border-color: #f4f4fc #75758c #75758c #f0f0fa;
		background: #cfcfe5;
	}

	.btn:disabled {
		color: #9c9cac;
		text-shadow: 1px 1px #fff;
	}

	.lock {
		width: 28px;
		height: 28px;
		padding: 2px;
		border: 2px solid;
		border-color: #fff #888 #888 #fff;
		background: #f2e4c8;
	}

	.actions {
		position: absolute;
		right: 13px;
		bottom: 10px;
		display: flex;
		gap: 13px;
	}

	.actions .btn {
		width: 82px;
		height: 30px;
	}

	.editor .actions .btn {
		width: 87px;
	}

	.led {
		width: 14px;
		height: 14px;
		margin-right: 8px;
		border-radius: 50%;
	}

	.green {
		background: radial-gradient(circle at 35% 30%, #b8ffb0, #12b012 40%, #045004);
	}

	.teal {
		background: radial-gradient(circle at 35% 30%, #d8f0ea, #2a6c64 40%, #0a2c2a);
	}

	.red {
		background: radial-gradient(circle at 35% 30%, #ffd0c0, #e02a20 40%, #601008);
	}

	.planet {
		position: absolute;
		left: 0;
		bottom: 0;
		width: 60px;
		height: 48px;
		overflow: hidden;
	}

	.editor {
		left: 455px;
		top: 630px;
		width: 606px;
		height: 261px;
		border-color: #99008c;
	}

	.editor .titlebar {
		background: #990088;
		color: #fff;
	}

	.criterion {
		display: flex;
		align-items: center;
		padding: 11px 13px 0;
	}

	.criterion label {
		margin: 0 4px 0 9px;
	}

	.criterion .combo.operator {
		width: 60px;
	}

	.criterion .combo.value {
		width: 130px;
	}

	.criterion .btn {
		padding: 0 7px;
		margin-right: 1px;
	}

	.filter-label {
		padding: 6px 13px 2px;
	}

	textarea {
		height: 101px;
		margin: 0 9px 0 10px;
		padding: 2px 5px;
		border: 1px solid #77777c;
		resize: none;
		outline: 0;
	}
</style>
